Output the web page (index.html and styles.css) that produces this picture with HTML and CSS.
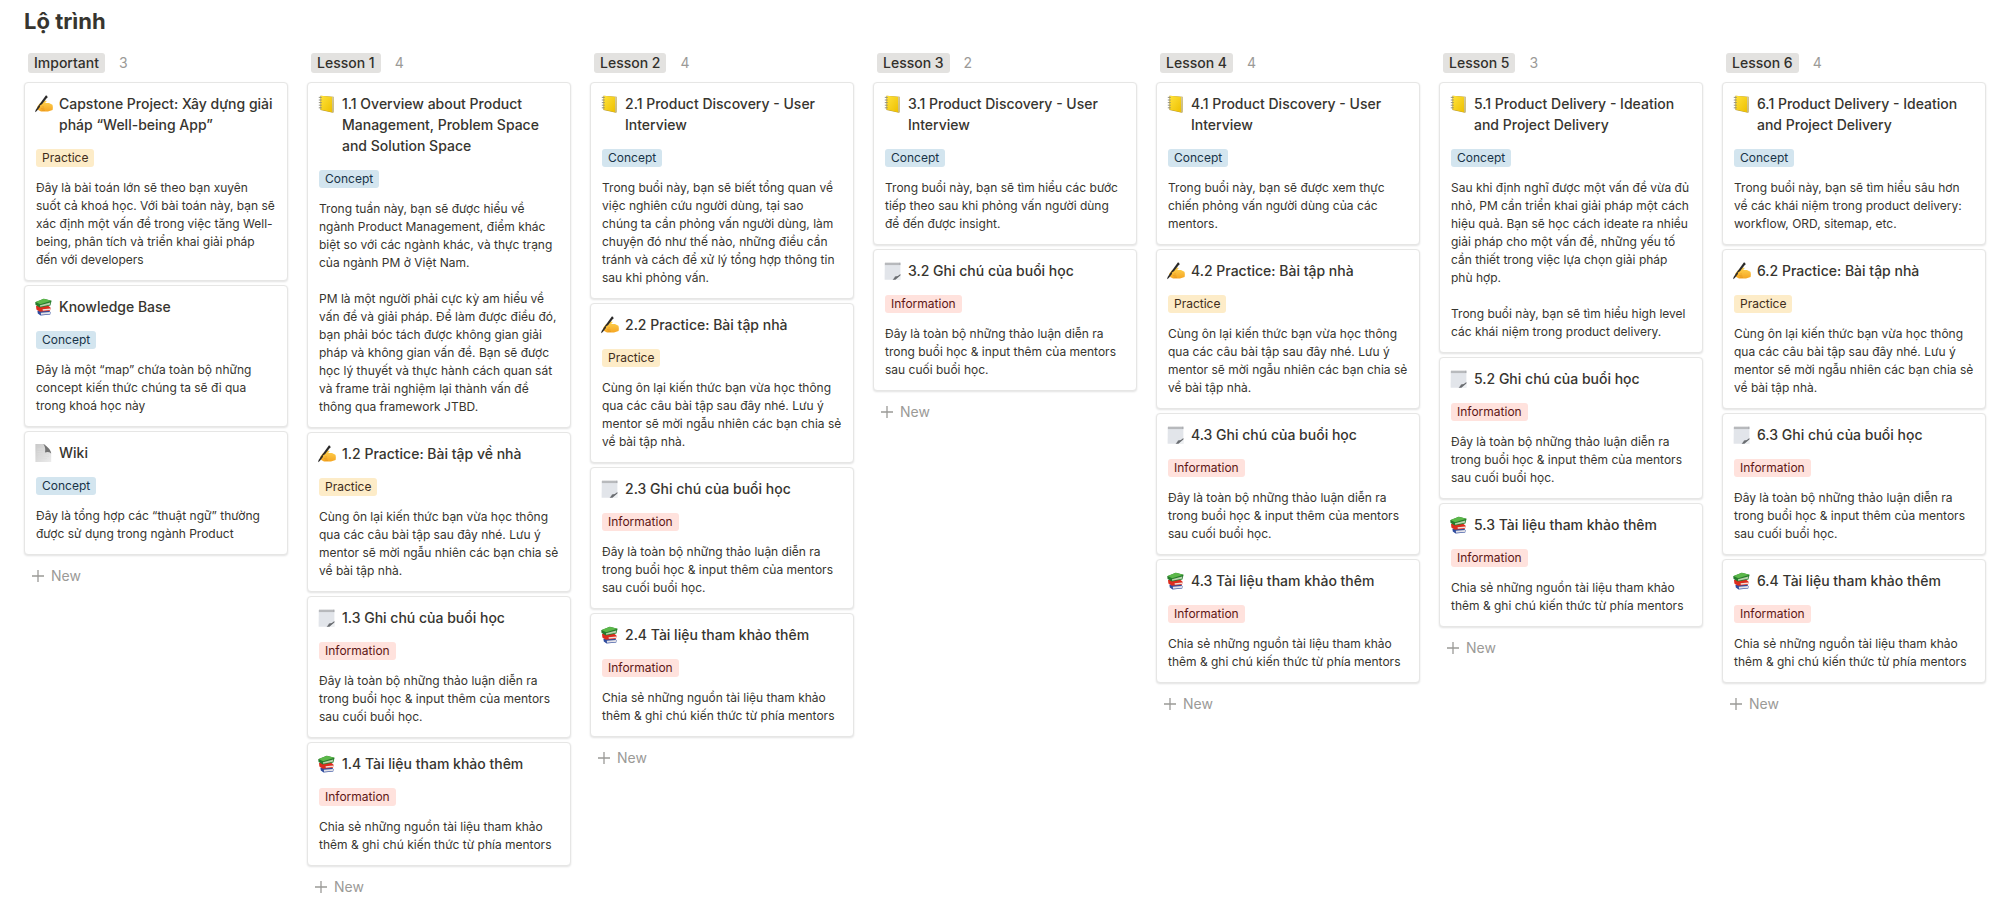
FILE: index.html
```html
<!DOCTYPE html>
<html lang="vi">
<head>
<meta charset="utf-8">
<meta name="viewport" content="width=device-width, initial-scale=1">
<title>Lộ trình</title>
<link rel="stylesheet" href="styles.css">
</head>
<body>
<svg class="sprite" aria-hidden="true">
  <defs>
    <linearGradient id="skin" x1="0" y1="0" x2="0" y2="1"><stop offset="0" stop-color="#ffd452"/><stop offset="1" stop-color="#f5a623"/></linearGradient>
    <linearGradient id="cover" x1="0" y1="0" x2="1" y2="1"><stop offset="0" stop-color="#ffe23a"/><stop offset="1" stop-color="#eec000"/></linearGradient>
    <linearGradient id="sheet" x1="0" y1="0" x2="1" y2="1"><stop offset="0" stop-color="#c9c9c9"/><stop offset="1" stop-color="#ececec"/></linearGradient>
  </defs>
  <symbol id="i-write" viewBox="0 0 18 18">
    <path d="M2 12 4.6 8.6 8 6.2 11 5.4 11.6 6.4 10 8 14 8 17.4 9.8Q18.2 12 17.6 15L13 16.4 6 16.4 2.8 14.8Z" fill="url(#skin)"/>
    <path d="M5.6 11.4 8.8 12M6 13.6 9.4 14M6.8 15.2 10 15.4" stroke="#dd8d18" stroke-width=".5" fill="none"/>
    <path d="M10.8.6Q12.6.2 12.4 2.2L6 10.6 1.8 16 0 17.2.8 14.8 4 10Z" fill="#2b2a2a"/>
    <path d="M4.6 10.8 7.6 9 9 10.6 5.6 12.4Z" fill="#fcc03a"/>
  </symbol>
  <symbol id="i-ledger" viewBox="0 0 18 18">
    <path d="M2.4 .8 15.6 1.8 16 17 14.8 17.8 2.4 15Z" fill="#b89a35"/>
    <path d="M2.8 .8 14 2 14 17.2 2.8 14.6Z" fill="url(#cover)"/>
    <path d="M14 2 15.4 2.2 15.8 17 14.4 17.4Z" fill="#d4cba0"/>
    <path d="M.8 2.4H3.8M.8 5H3.8M.8 7.6H3.8M.8 10.2H3.8M.8 12.8H3.8" stroke="#8b8976" stroke-width=".9"/>
  </symbol>
  <symbol id="i-books" viewBox="0 0 18 18">
    <path d="M2.4 12.8 13.4 12 15.6 14.2 15.2 16.6 5.6 17.6 2.8 15.4Z" fill="#2e4b9d"/>
    <path d="M5.8 14.8 15.2 14 14.8 16 6 16.8Z" fill="#e5e3e8"/>
    <path d="M1 8 13.6 8 15.6 9.8 15 12.8 4.8 13.8 1.4 11.4Z" fill="#dc2d1e"/>
    <path d="M7.6 11.2 15.2 10.4 15 12 7.8 12.8Z" fill="#f1dfd8"/>
    <path d="M.2 4.2 8.8.8 16.6 2.8 15.4 7.6 4.8 9.6.6 7Z" fill="#267b2c"/>
    <path d="M.6 4 8.8.8 16.4 2.8 5.2 6.2Z" fill="#5cb84a"/>
    <path d="M5 7.2 15.4 4.4 14.8 6.8 5.2 8.8Z" fill="#b9d2ad"/>
  </symbol>
  <symbol id="i-page" viewBox="0 0 18 18">
    <path d="M.4 0H9.6L16.2 8V18H.4Z" fill="url(#sheet)"/>
    <path d="M8.4 0Q11 3.8 10 8.4Q13.4 7.2 16.2 9.4Q15.4 4.4 8.4 0Z" fill="#737373"/>
    <path d="M2.4 5H8M2.4 7.4H9M2.4 9.8H14M2.4 12.2H14M2.4 14.6H12" stroke="#dcdcdc" stroke-width=".7"/>
  </symbol>
  <symbol id="i-notepad" viewBox="0 0 18 18">
    <path d="M.8 1H16.4V17.8H.6Z" fill="#e2e5ea"/>
    <path d="M.8 1H16.4V3.2H.8Z" fill="#cfd1d4"/>
    <path d="M2 .4V3M4 .4V3M6 .4V3M8 .4V3M10 .4V3M12 .4V3M14 .4V3M15.8 .4V3" stroke="#8b8d90" stroke-width=".7"/>
    <path d="M8.6 17.8Q10.6 15.8 11 14.6Q14 14.6 16.4 12L16.4 13.6 11.4 17.8Z" fill="#6a6d71"/>
    <path d="M12 17.8 16.4 14V17.8Z" fill="#eef0f2"/>
  </symbol>
  <symbol id="i-plus" viewBox="0 0 12 12">
    <path d="M6 0V12M0 6H12" stroke="currentColor" stroke-width="1.3" fill="none"/>
  </symbol>
</svg>

<main class="page">
<h1 class="page-title">Lộ trình</h1>
<div class="board">

<section class="column">
  <header class="group"><h2 class="group-name">Important</h2><span class="count">3</span></header>
  <article class="card"><h3 class="card-title"><svg class="icon"><use href="#i-write"/></svg><span>Capstone Project: Xây dựng giải pháp “Well-being App”</span></h3><span class="tag practice">Practice</span><p class="text">Đây là bài toán lớn sẽ theo bạn xuyên<br>suốt cả khoá học. Với bài toán này, bạn sẽ<br>xác định một vấn đề trong việc tăng Well-being, phân tích và triển khai giải pháp<br>đến với developers</p></article>
  <article class="card"><h3 class="card-title"><svg class="icon"><use href="#i-books"/></svg><span>Knowledge Base</span></h3><span class="tag concept">Concept</span><p class="text">Đây là một “map” chứa toàn bộ những concept kiến thức chúng ta sẽ đi qua trong khoá học này</p></article>
  <article class="card"><h3 class="card-title"><svg class="icon"><use href="#i-page"/></svg><span>Wiki</span></h3><span class="tag concept">Concept</span><p class="text">Đây là tổng hợp các “thuật ngữ” thường được sử dụng trong ngành Product</p></article>
  <button class="new" type="button"><svg class="plus"><use href="#i-plus"/></svg>New</button>
</section>

<section class="column">
  <header class="group"><h2 class="group-name">Lesson 1</h2><span class="count">4</span></header>
  <article class="card"><h3 class="card-title"><svg class="icon"><use href="#i-ledger"/></svg><span>1.1 Overview about Product Management, Problem Space and Solution Space</span></h3><span class="tag concept">Concept</span><p class="text">Trong tuần này, bạn sẽ được hiểu về ngành Product Management, điểm khác biệt so với các ngành khác, và thực trạng của ngành PM ở Việt Nam.<br><br>PM là một người phải cực kỳ am hiểu về vấn đề và giải pháp. Để làm được điều đó, bạn phải bóc tách được không gian giải pháp và không gian vấn đề. Bạn sẽ được học lý thuyết và thực hành cách quan sát và frame trải nghiệm lại thành vấn đề thông qua framework JTBD.</p></article>
  <article class="card"><h3 class="card-title"><svg class="icon"><use href="#i-write"/></svg><span>1.2 Practice: Bài tập về nhà</span></h3><span class="tag practice">Practice</span><p class="text">Cùng ôn lại kiến thức bạn vừa học thông qua các câu bài tập sau đây nhé. Lưu ý mentor sẽ mời ngẫu nhiên các bạn chia sẻ về bài tập nhà.</p></article>
  <article class="card"><h3 class="card-title"><svg class="icon"><use href="#i-notepad"/></svg><span>1.3 Ghi chú của buổi học</span></h3><span class="tag information">Information</span><p class="text">Đây là toàn bộ những thảo luận diễn ra trong buổi học &amp; input thêm của mentors sau cuối buổi học.</p></article>
  <article class="card"><h3 class="card-title"><svg class="icon"><use href="#i-books"/></svg><span>1.4 Tài liệu tham khảo thêm</span></h3><span class="tag information">Information</span><p class="text">Chia sẻ những nguồn tài liệu tham khảo thêm &amp; ghi chú kiến thức từ phía mentors</p></article>
  <button class="new" type="button"><svg class="plus"><use href="#i-plus"/></svg>New</button>
</section>

<section class="column">
  <header class="group"><h2 class="group-name">Lesson 2</h2><span class="count">4</span></header>
  <article class="card"><h3 class="card-title"><svg class="icon"><use href="#i-ledger"/></svg><span>2.1 Product Discovery - User Interview</span></h3><span class="tag concept">Concept</span><p class="text">Trong buổi này, bạn sẽ biết tổng quan về việc nghiên cứu người dùng, tại sao chúng ta cần phỏng vấn người dùng, làm chuyện đó như thế nào, những điều cần tránh và cách để xử lý tổng hợp thông tin sau khi phỏng vấn.</p></article>
  <article class="card"><h3 class="card-title"><svg class="icon"><use href="#i-write"/></svg><span>2.2 Practice: Bài tập nhà</span></h3><span class="tag practice">Practice</span><p class="text">Cùng ôn lại kiến thức bạn vừa học thông qua các câu bài tập sau đây nhé. Lưu ý mentor sẽ mời ngẫu nhiên các bạn chia sẻ về bài tập nhà.</p></article>
  <article class="card"><h3 class="card-title"><svg class="icon"><use href="#i-notepad"/></svg><span>2.3 Ghi chú của buổi học</span></h3><span class="tag information">Information</span><p class="text">Đây là toàn bộ những thảo luận diễn ra trong buổi học &amp; input thêm của mentors sau cuối buổi học.</p></article>
  <article class="card"><h3 class="card-title"><svg class="icon"><use href="#i-books"/></svg><span>2.4 Tài liệu tham khảo thêm</span></h3><span class="tag information">Information</span><p class="text">Chia sẻ những nguồn tài liệu tham khảo thêm &amp; ghi chú kiến thức từ phía mentors</p></article>
  <button class="new" type="button"><svg class="plus"><use href="#i-plus"/></svg>New</button>
</section>

<section class="column">
  <header class="group"><h2 class="group-name">Lesson 3</h2><span class="count">2</span></header>
  <article class="card"><h3 class="card-title"><svg class="icon"><use href="#i-ledger"/></svg><span>3.1 Product Discovery - User Interview</span></h3><span class="tag concept">Concept</span><p class="text">Trong buổi này, bạn sẽ tìm hiểu các bước tiếp theo sau khi phỏng vấn người dùng để đến được insight.</p></article>
  <article class="card"><h3 class="card-title"><svg class="icon"><use href="#i-notepad"/></svg><span>3.2 Ghi chú của buổi học</span></h3><span class="tag information">Information</span><p class="text">Đây là toàn bộ những thảo luận diễn ra trong buổi học &amp; input thêm của mentors sau cuối buổi học.</p></article>
  <button class="new" type="button"><svg class="plus"><use href="#i-plus"/></svg>New</button>
</section>

<section class="column">
  <header class="group"><h2 class="group-name">Lesson 4</h2><span class="count">4</span></header>
  <article class="card"><h3 class="card-title"><svg class="icon"><use href="#i-ledger"/></svg><span>4.1 Product Discovery - User Interview</span></h3><span class="tag concept">Concept</span><p class="text">Trong buổi này, bạn sẽ được xem thực chiến phỏng vấn người dùng của các mentors.</p></article>
  <article class="card"><h3 class="card-title"><svg class="icon"><use href="#i-write"/></svg><span>4.2 Practice: Bài tập nhà</span></h3><span class="tag practice">Practice</span><p class="text">Cùng ôn lại kiến thức bạn vừa học thông qua các câu bài tập sau đây nhé. Lưu ý mentor sẽ mời ngẫu nhiên các bạn chia sẻ về bài tập nhà.</p></article>
  <article class="card"><h3 class="card-title"><svg class="icon"><use href="#i-notepad"/></svg><span>4.3 Ghi chú của buổi học</span></h3><span class="tag information">Information</span><p class="text">Đây là toàn bộ những thảo luận diễn ra trong buổi học &amp; input thêm của mentors sau cuối buổi học.</p></article>
  <article class="card"><h3 class="card-title"><svg class="icon"><use href="#i-books"/></svg><span>4.3 Tài liệu tham khảo thêm</span></h3><span class="tag information">Information</span><p class="text">Chia sẻ những nguồn tài liệu tham khảo thêm &amp; ghi chú kiến thức từ phía mentors</p></article>
  <button class="new" type="button"><svg class="plus"><use href="#i-plus"/></svg>New</button>
</section>

<section class="column">
  <header class="group"><h2 class="group-name">Lesson 5</h2><span class="count">3</span></header>
  <article class="card"><h3 class="card-title"><svg class="icon"><use href="#i-ledger"/></svg><span>5.1 Product Delivery - Ideation and Project Delivery</span></h3><span class="tag concept">Concept</span><p class="text">Sau khi định nghĩ được một vấn đề vừa đủ nhỏ, PM cần triển khai giải pháp một cách hiệu quả. Bạn sẽ học cách ideate ra nhiều giải pháp cho một vấn đề, những yếu tố cần thiết trong việc lựa chọn giải pháp phù hợp.<br><br>Trong buổi này, bạn sẽ tìm hiểu high level các khái niệm trong product delivery.</p></article>
  <article class="card"><h3 class="card-title"><svg class="icon"><use href="#i-notepad"/></svg><span>5.2 Ghi chú của buổi học</span></h3><span class="tag information">Information</span><p class="text">Đây là toàn bộ những thảo luận diễn ra trong buổi học &amp; input thêm của mentors sau cuối buổi học.</p></article>
  <article class="card"><h3 class="card-title"><svg class="icon"><use href="#i-books"/></svg><span>5.3 Tài liệu tham khảo thêm</span></h3><span class="tag information">Information</span><p class="text">Chia sẻ những nguồn tài liệu tham khảo thêm &amp; ghi chú kiến thức từ phía mentors</p></article>
  <button class="new" type="button"><svg class="plus"><use href="#i-plus"/></svg>New</button>
</section>

<section class="column">
  <header class="group"><h2 class="group-name">Lesson 6</h2><span class="count">4</span></header>
  <article class="card"><h3 class="card-title"><svg class="icon"><use href="#i-ledger"/></svg><span>6.1 Product Delivery - Ideation and Project Delivery</span></h3><span class="tag concept">Concept</span><p class="text">Trong buổi này, bạn sẽ tìm hiểu sâu hơn về các khái niệm trong product delivery: workflow, ORD, sitemap, etc.</p></article>
  <article class="card"><h3 class="card-title"><svg class="icon"><use href="#i-write"/></svg><span>6.2 Practice: Bài tập nhà</span></h3><span class="tag practice">Practice</span><p class="text">Cùng ôn lại kiến thức bạn vừa học thông qua các câu bài tập sau đây nhé. Lưu ý mentor sẽ mời ngẫu nhiên các bạn chia sẻ về bài tập nhà.</p></article>
  <article class="card"><h3 class="card-title"><svg class="icon"><use href="#i-notepad"/></svg><span>6.3 Ghi chú của buổi học</span></h3><span class="tag information">Information</span><p class="text">Đây là toàn bộ những thảo luận diễn ra trong buổi học &amp; input thêm của mentors sau cuối buổi học.</p></article>
  <article class="card"><h3 class="card-title"><svg class="icon"><use href="#i-books"/></svg><span>6.4 Tài liệu tham khảo thêm</span></h3><span class="tag information">Information</span><p class="text">Chia sẻ những nguồn tài liệu tham khảo thêm &amp; ghi chú kiến thức từ phía mentors</p></article>
  <button class="new" type="button"><svg class="plus"><use href="#i-plus"/></svg>New</button>
</section>

</div>
</main>
</body>
</html>
```
FILE: styles.css
```css
* {
  box-sizing: border-box;
}

body {
  margin: 0;
  background: #fff;
  color: #37352f;
  font-family: Inter, "Noto Sans", sans-serif;
}

h1, h2, h3, p {
  margin: 0;
}

.sprite {
  position: absolute;
  width: 0;
  height: 0;
}

.page {
  padding: 6px 14px 0 24px;
}

.page-title {
  font-size: 22px;
  line-height: 30px;
  font-weight: 700;
}

.board {
  display: grid;
  grid-template-columns: repeat(7, minmax(0, 1fr));
  gap: 19px;
  align-items: start;
  padding-top: 17px;
}

.column {
  display: flex;
  flex-direction: column;
  gap: 4px;
}

.group {
  display: flex;
  align-items: center;
  gap: 14px;
  padding: 0 4px 5px;
}

.group-name {
  padding: 0 6px;
  border-radius: 3px;
  background: #e3e2e0;
  color: #32302c;
  font-size: 14px;
  line-height: 20px;
  font-weight: 500;
}

.count {
  color: #9b9a97;
  font-size: 14px;
  line-height: 20px;
}

.card {
  padding: 10px 11px 11px;
  border: 1px solid #e6e6e5;
  border-radius: 4px;
  background: #fff;
  box-shadow: 0 1px 2px rgba(15, 15, 15, 0.12);
}

.card-title {
  display: flex;
  gap: 6px;
  margin-bottom: 14px;
  font-size: 14px;
  line-height: 21px;
  font-weight: 500;
}

.icon {
  flex: none;
  width: 18px;
  height: 18px;
  margin: 2px 0 0 -1px;
}

.tag {
  display: block;
  width: fit-content;
  margin-bottom: 12px;
  padding: 0 6px;
  border-radius: 3px;
  font-size: 12px;
  line-height: 18px;
}

.practice {
  background: #fdecc8;
  color: #402c1b;
}

.concept {
  background: #d3e5ef;
  color: #183347;
}

.information {
  background: #ffe2dd;
  color: #5d1715;
}

.text {
  font-size: 12px;
  line-height: 18px;
}

.new {
  display: flex;
  align-items: center;
  gap: 7px;
  align-self: flex-start;
  padding: 7px 8px;
  border: 0;
  background: none;
  color: #9b9a97;
  font: inherit;
  font-size: 14px;
  line-height: 20px;
}

.plus {
  width: 12px;
  height: 12px;
}
```
